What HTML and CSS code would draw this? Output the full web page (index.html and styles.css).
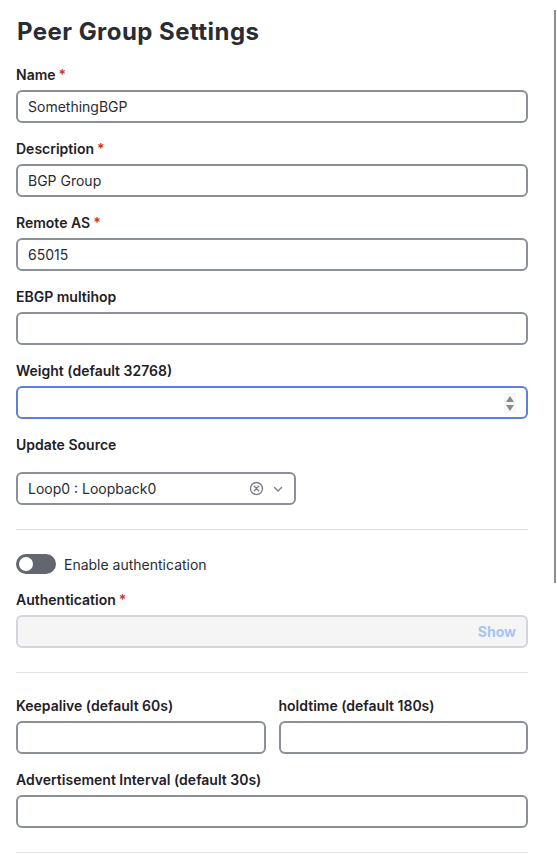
FILE: index.html
```html
<!DOCTYPE html>
<html lang="en">
<head>
  <meta charset="UTF-8">
  <title>Peer Group Settings</title>
  <link rel="stylesheet" href="styles.css">
</head>
<body>
  <div class="panel">
    <h1>Peer Group Settings</h1>

    <div class="field">
      <label>Name<span class="req">*</span></label>
      <div class="input">SomethingBGP</div>
    </div>

    <div class="field">
      <label>Description<span class="req">*</span></label>
      <div class="input">BGP Group</div>
    </div>

    <div class="field">
      <label>Remote AS<span class="req">*</span></label>
      <div class="input">65015</div>
    </div>

    <div class="field">
      <label>EBGP multihop</label>
      <div class="input"></div>
    </div>

    <div class="field">
      <label>Weight (default 32768)</label>
      <div class="input focused">
        <span class="spinner">
          <svg width="10" height="20" viewBox="0 0 10 20">
            <path d="M5 3 L9 9 L1 9 Z" fill="#8b8b8b"/>
            <path d="M1 12 L9 12 L5 18 Z" fill="#8b8b8b"/>
          </svg>
        </span>
      </div>
    </div>

    <div class="field select-field">
      <label>Update Source</label>
      <div class="select">
        <span>Loop0 : Loopback0</span>
        <span class="select-icons">
          <svg width="15" height="15" viewBox="0 0 15 15">
            <circle cx="7.5" cy="7.5" r="6" fill="none" stroke="#7d8088" stroke-width="1.4"/>
            <path d="M5.3 5.3 L9.7 9.7 M9.7 5.3 L5.3 9.7" stroke="#7d8088" stroke-width="1.4" stroke-linecap="round"/>
          </svg>
          <svg width="12" height="12" viewBox="0 0 12 12">
            <path d="M2.5 4.5 L6 8 L9.5 4.5" fill="none" stroke="#7d8088" stroke-width="1.4" stroke-linecap="round" stroke-linejoin="round"/>
          </svg>
        </span>
      </div>
    </div>

    <hr class="divider">

    <div class="toggle-row">
      <span class="toggle"><span class="knob"></span></span>
      <span>Enable authentication</span>
    </div>

    <div class="field">
      <label>Authentication<span class="req">*</span></label>
      <div class="input disabled"><span class="show">Show</span></div>
    </div>

    <hr class="divider">

    <div class="row">
      <div class="field">
        <label>Keepalive (default 60s)</label>
        <div class="input"></div>
      </div>
      <div class="field">
        <label>holdtime (default 180s)</label>
        <div class="input"></div>
      </div>
    </div>

    <div class="field">
      <label>Advertisement Interval (default 30s)</label>
      <div class="input"></div>
    </div>

    <hr class="divider">
  </div>

  <div class="scroll-thumb"></div>
</body>
</html>
```

FILE: styles.css
```css
body {
  margin: 0;
  font-family: Inter, "Noto Sans", sans-serif;
  color: #1f2126;
  background: #fff;
  overflow: hidden;
}
.panel {
  padding: 16px 29px 0 16px;
}
h1 {
  margin: 0 0 18px 1px;
  font-size: 24px;
  font-weight: 700;
  letter-spacing: 0.45px;
  color: #2a2c33;
  line-height: 32px;
}
.field {
  display: flex;
  flex-direction: column;
  margin-bottom: 17px;
}
label {
  font-size: 14px;
  font-weight: 600;
  line-height: 18px;
  margin-bottom: 6px;
  color: #1f2126;
}
.req {
  color: #c0392b;
  margin-left: 3px;
}
.input {
  height: 33px;
  box-sizing: border-box;
  border: 2px solid #8b8f97;
  border-radius: 6px;
  padding: 0 10px;
  display: flex;
  align-items: center;
  font-size: 14px;
  color: #2a2c33;
}
.input.focused {
  border-color: #5d80dc;
  justify-content: flex-end;
  padding-right: 10px;
}
.spinner {
  display: flex;
  background: #f7f7f7;
  padding: 0 1px;
}
.input.disabled {
  background: #f5f5f5;
  border-color: #d4d6db;
  justify-content: flex-end;
}
.show {
  color: #a9c2f6;
  font-weight: 700;
  font-size: 14px;
}
.select-field label {
  margin-bottom: 18px;
}
.select {
  width: 280px;
  height: 33px;
  box-sizing: border-box;
  border: 2px solid #8b8f97;
  border-radius: 6px;
  padding: 0 10px;
  display: flex;
  align-items: center;
  justify-content: space-between;
  font-size: 14px;
  color: #2a2c33;
}
.select-icons {
  display: flex;
  align-items: center;
  gap: 8px;
}
/* field margin collapses into this, so the gap above is 24px */
.divider {
  border: none;
  border-top: 1px solid #e2e3e6;
  margin: 24px 0;
}
.toggle-row {
  display: flex;
  align-items: center;
  gap: 8px;
  font-size: 14px;
  color: #2a2c33;
  margin-bottom: 17px;
}
.toggle {
  width: 40px;
  height: 20px;
  border-radius: 10px;
  background: #62666e;
  display: flex;
  align-items: center;
  padding: 0 3px;
  box-sizing: border-box;
}
.knob {
  width: 14px;
  height: 14px;
  border-radius: 50%;
  background: #fff;
}
.row {
  display: grid;
  grid-template-columns: 1fr 1fr;
  gap: 13px;
}
.scroll-thumb {
  position: absolute;
  top: 10px;
  right: 1px;
  width: 2px;
  height: 573px;
  background: #8d8f94;
}
```
